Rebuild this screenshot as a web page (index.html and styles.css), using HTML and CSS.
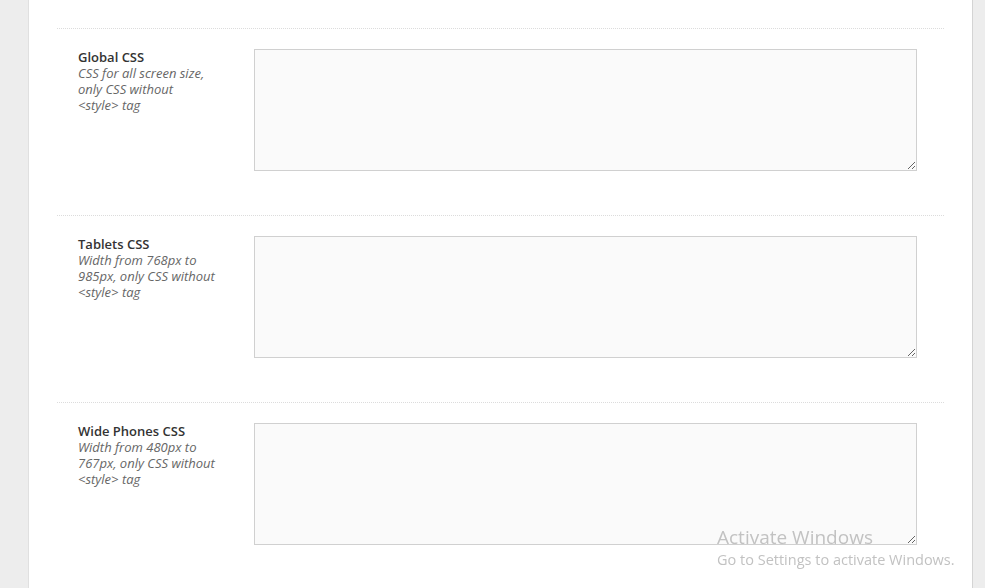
FILE: index.html
```html
<!DOCTYPE html>
<html lang="en">
<head>
  <meta charset="UTF-8">
  <meta name="viewport" content="width=device-width, initial-scale=1.0">
  <title>Custom CSS</title>
  <link rel="stylesheet" href="styles.css">
</head>
<body>

  <div class="panel">
    <div class="css-row">
      <div class="css-label">
        <strong>Global CSS</strong>
        <em>CSS for all screen size, only CSS without &lt;style&gt; tag</em>
      </div>
      <textarea class="css-field"></textarea>
    </div>

    <div class="css-row">
      <div class="css-label">
        <strong>Tablets CSS</strong>
        <em>Width from 768px to 985px, only CSS without &lt;style&gt; tag</em>
      </div>
      <textarea class="css-field"></textarea>
    </div>

    <div class="css-row">
      <div class="css-label">
        <strong>Wide Phones CSS</strong>
        <em>Width from 480px to 767px, only CSS without &lt;style&gt; tag</em>
      </div>
      <textarea class="css-field"></textarea>
    </div>
  </div>

  <div class="activate">
    <div class="activate-title">Activate Windows</div>
    <div class="activate-text">Go to Settings to activate Windows.</div>
  </div>

</body>
</html>
```

FILE: styles.css
```css
body {
  margin: 0;
  background-color: #ededed;
  font-family: "Open Sans", Arial, sans-serif;
  font-size: 13px;
  line-height: 16px;
  color: #333;
  height: 588px;
  overflow: hidden;
}

.panel {
  margin-left: 28px;
  width: 945px;
  min-height: 588px;
  background-color: #fff;
  border-left: 1px solid #e0e0e0;
  border-right: 1px solid #d4d4d4;
  padding: 28px 28px 0;
  box-sizing: border-box;
}

.css-row {
  display: grid;
  grid-template-columns: 176px 1fr;
  border-top: 1px dotted #dcdcdc;
  padding: 20px 27px 44px 21px;
}

.css-label {
  display: flex;
  flex-direction: column;
  max-width: 137px;
}

.css-label strong {
  font-weight: 600;
  color: #333;
}

.css-label em {
  color: #666;
}

.css-field {
  height: 122px;
  box-sizing: border-box;
  background-color: #fafafa;
  border: 1px solid #d0d0d0;
  margin: 0;
  padding: 6px;
  resize: vertical;
  font-family: "Liberation Mono", monospace;
}

.activate {
  position: fixed;
  left: 717px;
  top: 524px;
  color: #c2c2c2;
  font-family: "Open Sans", "Noto Sans", sans-serif;
  pointer-events: none;
}

.activate-title {
  font-size: 19px;
  line-height: 26px;
}

.activate-text {
  font-size: 14.5px;
  line-height: 20px;
}
```
